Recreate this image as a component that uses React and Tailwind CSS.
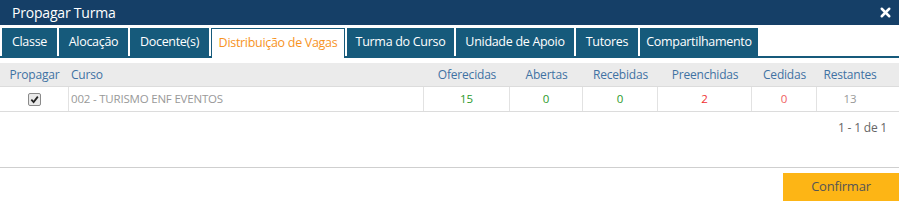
import { X } from 'lucide-react';

const tabs = ['Classe', 'Alocação', 'Docente(s)', 'Distribuição de Vagas', 'Turma do Curso', 'Unidade de Apoio', 'Tutores', 'Compartilhamento'];
const tabWidths = ['w-[55px]', 'w-[69px]', 'w-[79px]', 'w-[134px]', 'w-[107px]', 'w-[118px]', 'w-[62px]', 'w-[118px]'];

const cols = [
  { label: 'Oferecidas', w: 'w-[86px]', value: '15', color: 'text-[#2c9a2c]' },
  { label: 'Abertas', w: 'w-[73px]', value: '0', color: 'text-[#2c9a2c]' },
  { label: 'Recebidas', w: 'w-[75px]', value: '0', color: 'text-[#2c9a2c]' },
  { label: 'Preenchidas', w: 'w-[94px]', value: '2', color: 'text-[#f03030]' },
  { label: 'Cedidas', w: 'w-[65px]', value: '0', color: 'text-[#f06060]' },
  { label: 'Restantes', w: 'w-[66px]', value: '13', color: 'text-[#999]' },
];

export default function App() {
  return (
    <div className="w-[899px] h-[201px] bg-white overflow-hidden text-[13px]" style={{ fontFamily: '"Open Sans", "Liberation Sans", sans-serif' }}>
      {/* title */}
      <div className="h-[25px] bg-[#153f67] flex items-center justify-between pl-[12px] pr-[6px]">
        <span className="text-white text-[14px] tracking-[-0.2px]">Propagar Turma</span>
        <X className="text-white" size={15} strokeWidth={4} />
      </div>

      {/* tabs */}
      <div className="mt-[3px] flex gap-[2px] pl-[2px] border-b-2 border-[#165a7b] h-[30px]">
        {tabs.map((t, i) =>
          i === 3 ? (
            <div key={t} className={`${tabWidths[i]} h-[30px] bg-white border border-b-0 border-[#165a7b] flex items-center justify-center text-[#f7931e] tracking-[-0.3px] text-[12.5px]`}>
              {t}
            </div>
          ) : (
            <div key={t} className={`${tabWidths[i]} h-[28px] bg-[#165a7b] flex items-center justify-center text-white tracking-[-0.3px] text-[12.5px] font-medium`}>
              {t}
            </div>
          )
        )}
      </div>

      {/* table */}
      <div className="mt-[5px] text-[12px] tracking-[-0.2px]">
        <div className="h-[24px] bg-[#ebebeb] flex items-center text-[#3f72a3] border-b border-[#dcdcdc]">
          <div className="w-[69px] text-center">Propagar</div>
          <div className="w-[355px] pl-[2px]">Curso</div>
          {cols.map((c) => (
            <div key={c.label} className={`${c.w} text-center`}>{c.label}</div>
          ))}
        </div>
        <div className="h-[25px] flex items-stretch border-b border-[#dcdcdc] text-[11.5px]">
          <div className="w-[69px] flex items-center justify-center border-r border-[#e2e2e2]">
            <span className="w-[13px] h-[13px] rounded-[2px] border border-[#8a8a8a] bg-[#e9e9e9] flex items-center justify-center">
              <svg width="9" height="9" viewBox="0 0 10 10">
                <path d="M1.5 5.2 L4 7.8 L8.7 1.8" fill="none" stroke="#222" strokeWidth="2" />
              </svg>
            </span>
          </div>
          <div className="w-[355px] flex items-center pl-[2px] text-[#999] border-r border-[#e2e2e2]">002 - TURISMO ENF EVENTOS</div>
          {cols.map((c, i) => (
            <div key={c.label} className={`${c.w} flex items-center justify-center ${c.color} ${i < cols.length - 1 ? 'border-r border-[#e2e2e2]' : ''}`}>
              {c.value}
            </div>
          ))}
        </div>
        <div className="h-[32px] flex items-center justify-end pr-[12px] text-[#666] text-[12px]">1 - 1 de 1</div>
      </div>

      {/* footer */}
      <div className="mt-[23px] border-t border-[#cfcfcf] pt-[5px] flex justify-end">
        <button className="w-[116px] h-[28px] bg-[#fdb515] text-[#555] text-[13px] tracking-[-0.2px]">Confirmar</button>
      </div>
    </div>
  );
}
